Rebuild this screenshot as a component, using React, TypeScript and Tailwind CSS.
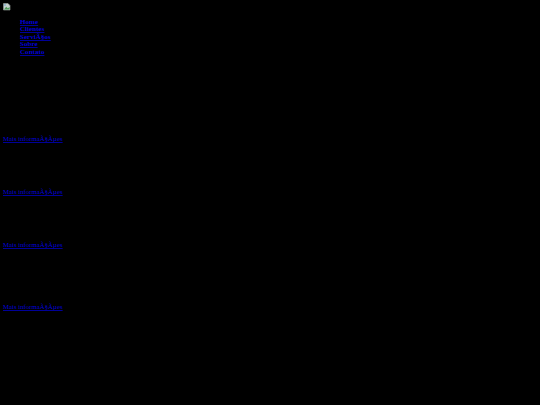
const NAV = ['Home', 'Clientes', 'ServiÃ§os', 'Sobre', 'Contato']

const SECTIONS = [
  { id: 'a', gap: 'mt-[78.6px]' },
  { id: 'b', gap: 'mt-[45.4px]' },
  { id: 'c', gap: 'mt-[45.4px]' },
  { id: 'd', gap: 'mt-[54.6px]' },
]

function BrokenImage() {
  return (
    <svg width="8" height="8" viewBox="0 0 8 8" className="block">
      <path d="M0.5 0.5H5L7 2.5V7H0.5Z" fill="#c4d0cc" stroke="#9aa5a0" strokeWidth="0.6" />
      <path d="M1 6.6L3.2 3.8L4.8 5.2L6.6 4V6.6Z" fill="#4f9a5a" />
      <path d="M1.2 1.2H2.8V2.8H1.2Z" fill="#7fa8d0" />
    </svg>
  )
}

export default function App() {
  return (
    <div className="h-[405px] w-[540px] overflow-hidden bg-black pl-[3px] pt-[3px] font-['Liberation_Serif',serif] text-[6.8px] font-medium leading-[7.6px] text-[#0000d8]">
      <BrokenImage />
      <ul className="ml-[17px] mt-[7.5px] flex flex-col text-[7.1px] font-bold">
        {NAV.map((item) => (
          <li key={item} className="h-[7.6px]">
            <a href="#" className="underline decoration-[#000099]">{item}</a>
          </li>
        ))}
      </ul>
      {SECTIONS.map((s) => (
        <p key={s.id} className={s.gap}>
          <a href="#" className="underline decoration-[#000099]">Mais informaÃ§Ãµes</a>
        </p>
      ))}
    </div>
  )
}
